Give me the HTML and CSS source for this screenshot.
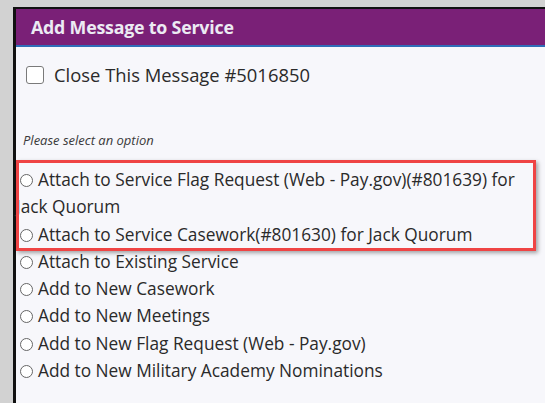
FILE: index.html
```html
<!DOCTYPE html>
<html lang="en">
<head>
<meta charset="utf-8">
<title>Add Message to Service</title>
<link rel="stylesheet" href="styles.css">
</head>
<body>
<div class="dialog">
  <div class="dialog-header">
    <span class="dialog-title">Add Message to Service</span>
  </div>
  <div class="dialog-body">
    <label class="close-row">
      <input type="checkbox" class="check">
      <span>Close This Message #5016850</span>
    </label>
    <p class="hint">Please select an option</p>
    <div class="options">
      <div class="highlight"></div>
      <label class="option"><input type="radio" name="target" class="radio">Attach to Service Flag Request (Web - Pay.gov)(#801639) for Jack Quorum</label>
      <label class="option"><input type="radio" name="target" class="radio">Attach to Service Casework(#801630) for Jack Quorum</label>
      <label class="option"><input type="radio" name="target" class="radio">Attach to Existing Service</label>
      <label class="option"><input type="radio" name="target" class="radio">Add to New Casework</label>
      <label class="option"><input type="radio" name="target" class="radio">Add to New Meetings</label>
      <label class="option"><input type="radio" name="target" class="radio">Add to New Flag Request (Web - Pay.gov)</label>
      <label class="option"><input type="radio" name="target" class="radio">Add to New Military Academy Nominations</label>
    </div>
  </div>
</div>
</body>
</html>
```
FILE: styles.css
```css
html, body {
  margin: 0;
  height: 100%;
  overflow: hidden;
}

body {
  background: #d2d2d2;
  padding: 7px 0 0 13px;
  font-family: "Open Sans", "Noto Sans", sans-serif;
  color: #2a2a2a;
}

.dialog {
  width: 560px;
  height: 420px;
  border-top: 2px solid #111;
  border-left: 3px solid #111;
  background: #f7f7fb;
}

.dialog-header {
  height: 36px;
  background: #7a2077;
  border-bottom: 2px solid #2f6db8;
  display: flex;
  align-items: center;
  padding: 0 0 0 15px;
}

.dialog-title {
  color: #ecebf3;
  font-weight: 700;
  font-size: 17.8px;
  letter-spacing: -0.2px;
}

.dialog-body {
  padding-top: 18px;
}

.close-row {
  display: flex;
  align-items: center;
  gap: 10px;
  padding-left: 10px;
  font-size: 18.4px;
  line-height: 20px;
}

.check {
  appearance: none;
  margin: 0;
  width: 18px;
  height: 18px;
  border: 1px solid #7a7a7a;
  border-radius: 3px;
  background: #fff;
}

.hint {
  margin: 46px 0 0 7px;
  font-size: 13px;
  font-style: italic;
  color: #3a3a3a;
}

.options {
  position: relative;
  width: 520px;
  margin-top: 17px;
  font-size: 17.3px;
  line-height: 27.3px;
}

.option {
  display: block;
}

.radio {
  appearance: none;
  width: 13px;
  height: 13px;
  margin: 0 5px 0 4px;
  border: 1px solid #666;
  border-radius: 50%;
  background: #fff;
  vertical-align: -1px;
}

/* red outline around the two matching services */
.highlight {
  position: absolute;
  left: 0;
  top: -6px;
  width: 514px;
  height: 85px;
  border: 3px solid #ef4444;
  box-shadow: 2px 2px 4px rgba(0, 0, 0, 0.35);
  pointer-events: none;
}
```
